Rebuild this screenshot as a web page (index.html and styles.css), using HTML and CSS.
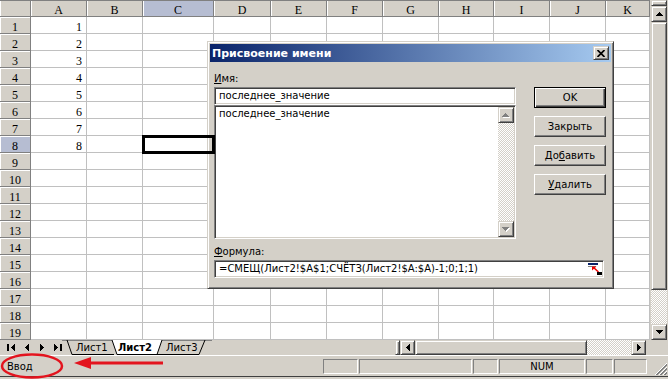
FILE: index.html
```html
<!DOCTYPE html>
<html>
<head>
    <meta charset="utf-8">
    <title>Присвоение имени</title>
    <link rel="stylesheet" href="styles.css">
</head>
<body>
<div class="window">
    <div class="sheet-area">
        <div class="grid">
            <span class="corner"></span><span class="hdr">A</span><span class="hdr">B</span><span class="hdr sel">C</span><span class="hdr">D</span><span class="hdr">E</span><span class="hdr">F</span><span class="hdr">G</span><span class="hdr">H</span><span class="hdr">I</span><span class="hdr">J</span><span class="hdr">K</span>
            <span class="rh">1</span><span class="c num">1</span><span class="c"></span><span class="c"></span><span class="c"></span><span class="c"></span><span class="c"></span><span class="c"></span><span class="c"></span><span class="c"></span><span class="c"></span><span class="c"></span>
            <span class="rh">2</span><span class="c num">2</span><span class="c"></span><span class="c"></span><span class="c"></span><span class="c"></span><span class="c"></span><span class="c"></span><span class="c"></span><span class="c"></span><span class="c"></span><span class="c"></span>
            <span class="rh">3</span><span class="c num">3</span><span class="c"></span><span class="c"></span><span class="c"></span><span class="c"></span><span class="c"></span><span class="c"></span><span class="c"></span><span class="c"></span><span class="c"></span><span class="c"></span>
            <span class="rh">4</span><span class="c num">4</span><span class="c"></span><span class="c"></span><span class="c"></span><span class="c"></span><span class="c"></span><span class="c"></span><span class="c"></span><span class="c"></span><span class="c"></span><span class="c"></span>
            <span class="rh">5</span><span class="c num">5</span><span class="c"></span><span class="c"></span><span class="c"></span><span class="c"></span><span class="c"></span><span class="c"></span><span class="c"></span><span class="c"></span><span class="c"></span><span class="c"></span>
            <span class="rh">6</span><span class="c num">6</span><span class="c"></span><span class="c"></span><span class="c"></span><span class="c"></span><span class="c"></span><span class="c"></span><span class="c"></span><span class="c"></span><span class="c"></span><span class="c"></span>
            <span class="rh">7</span><span class="c num">7</span><span class="c"></span><span class="c"></span><span class="c"></span><span class="c"></span><span class="c"></span><span class="c"></span><span class="c"></span><span class="c"></span><span class="c"></span><span class="c"></span>
            <span class="rh sel">8</span><span class="c num">8</span><span class="c"></span><span class="c active"></span><span class="c"></span><span class="c"></span><span class="c"></span><span class="c"></span><span class="c"></span><span class="c"></span><span class="c"></span><span class="c"></span>
            <span class="rh">9</span><span class="c"></span><span class="c"></span><span class="c"></span><span class="c"></span><span class="c"></span><span class="c"></span><span class="c"></span><span class="c"></span><span class="c"></span><span class="c"></span><span class="c"></span>
            <span class="rh">10</span><span class="c"></span><span class="c"></span><span class="c"></span><span class="c"></span><span class="c"></span><span class="c"></span><span class="c"></span><span class="c"></span><span class="c"></span><span class="c"></span><span class="c"></span>
            <span class="rh">11</span><span class="c"></span><span class="c"></span><span class="c"></span><span class="c"></span><span class="c"></span><span class="c"></span><span class="c"></span><span class="c"></span><span class="c"></span><span class="c"></span><span class="c"></span>
            <span class="rh">12</span><span class="c"></span><span class="c"></span><span class="c"></span><span class="c"></span><span class="c"></span><span class="c"></span><span class="c"></span><span class="c"></span><span class="c"></span><span class="c"></span><span class="c"></span>
            <span class="rh">13</span><span class="c"></span><span class="c"></span><span class="c"></span><span class="c"></span><span class="c"></span><span class="c"></span><span class="c"></span><span class="c"></span><span class="c"></span><span class="c"></span><span class="c"></span>
            <span class="rh">14</span><span class="c"></span><span class="c"></span><span class="c"></span><span class="c"></span><span class="c"></span><span class="c"></span><span class="c"></span><span class="c"></span><span class="c"></span><span class="c"></span><span class="c"></span>
            <span class="rh">15</span><span class="c"></span><span class="c"></span><span class="c"></span><span class="c"></span><span class="c"></span><span class="c"></span><span class="c"></span><span class="c"></span><span class="c"></span><span class="c"></span><span class="c"></span>
            <span class="rh">16</span><span class="c"></span><span class="c"></span><span class="c"></span><span class="c"></span><span class="c"></span><span class="c"></span><span class="c"></span><span class="c"></span><span class="c"></span><span class="c"></span><span class="c"></span>
            <span class="rh">17</span><span class="c"></span><span class="c"></span><span class="c"></span><span class="c"></span><span class="c"></span><span class="c"></span><span class="c"></span><span class="c"></span><span class="c"></span><span class="c"></span><span class="c"></span>
            <span class="rh">18</span><span class="c"></span><span class="c"></span><span class="c"></span><span class="c"></span><span class="c"></span><span class="c"></span><span class="c"></span><span class="c"></span><span class="c"></span><span class="c"></span><span class="c"></span>
            <span class="rh">19</span><span class="c"></span><span class="c"></span><span class="c"></span><span class="c"></span><span class="c"></span><span class="c"></span><span class="c"></span><span class="c"></span><span class="c"></span><span class="c"></span><span class="c"></span>
        </div>
        <div class="vscroll">
            <div class="split-box raised"></div>
            <div class="sb-btn raised"><svg width="7" height="4"><path d="M3 0h1v1h1v1h1v1h1v1H0V3h1V2h1V1h1z"/></svg></div>
            <div class="thumb raised"></div>
            <div class="track"></div>
            <div class="sb-btn raised"><svg width="7" height="4"><path d="M0 0h7v1H6v1H5v1H4v1H3V3H2V2H1V1H0z"/></svg></div>
        </div>
    </div>

    <div class="tabbar">
        <div class="tab-nav">
            <svg width="8" height="7"><path d="M0 0h2v7H0z"/><path d="M7 0h1v7H7V6H6V5H5V4H4V3h1V2h1V1h1z"/></svg>
            <svg width="4" height="7"><path d="M3 0h1v7H3V6H2V5H1V4H0V3h1V2h1V1h1z"/></svg>
            <svg width="4" height="7"><path d="M0 0h1v1h1v1h1v1h1v1H3v1H2v1H1v1H0z"/></svg>
            <svg width="8" height="7"><path d="M0 0h1v1h1v1h1v1h1v1H3v1H2v1H1v1H0z"/><path d="M6 0h2v7H6z"/></svg>
        </div>
        <div class="tabs">
            <svg class="tab-shape" width="150" height="15">
                <path d="M0 0.5H50M100 0.5H150" stroke="#808080" fill="none"/>
                <path d="M5 0L10 14.5H52" stroke="#000" fill="none"/>
                <path d="M50 0L55 14.5H95L100 0" stroke="#000" fill="#fff"/>
                <path d="M95 14.5H137L143 0" stroke="#000" fill="none"/>
            </svg>
            <span class="tab">Лист1</span>
            <span class="tab active">Лист2</span>
            <span class="tab">Лист3</span>
        </div>
        <div class="hscroll">
            <div class="splitter raised"></div>
            <div class="sb-btn raised"><svg width="4" height="7"><path d="M3 0h1v7H3V6H2V5H1V4H0V3h1V2h1V1h1z"/></svg></div>
            <div class="thumb raised"></div>
            <div class="track"></div>
            <div class="sb-btn raised"><svg width="4" height="7"><path d="M0 0h1v1h1v1h1v1h1v1H3v1H2v1H1v1H0z"/></svg></div>
            <div class="hs-end"></div>
        </div>
        <div class="sb-corner"></div>
    </div>

    <div class="statusbar">
        <span class="status-text">Ввод</span>
        <div class="panels">
            <span class="panel p1"></span>
            <span class="panel p2"></span>
            <span class="panel p3"></span>
            <span class="panel p4">NUM</span>
            <span class="panel p5"></span>
            <span class="panel p6"></span>
        </div>
        <svg class="grip" width="12" height="12">
            <path d="M12 0L0 12M12 4L4 12M12 8L8 12" stroke="#fff" fill="none"/>
            <path d="M12 1L1 12M12 2L2 12M12 5L5 12M12 6L6 12M12 9L9 12M12 10L10 12" stroke="#808080" fill="none"/>
        </svg>
    </div>

    <!-- пометка на скриншоте -->
    <svg class="annot" width="668" height="379">
        <ellipse cx="32" cy="366" rx="30" ry="11.5" stroke="#e3141e" stroke-width="2.5" fill="none"/>
        <path d="M86 363H163" stroke="#e3141e" stroke-width="3"/>
        <path d="M74 363L91 357V369Z" fill="#e3141e"/>
    </svg>

    <div class="dialog">
        <div class="titlebar">
            <span class="title">Присвоение имени</span>
            <div class="close-btn raised">
                <svg width="8" height="7"><path d="M0.5 0L7.5 7M7.5 0L0.5 7" stroke="#000" stroke-width="1.7"/></svg>
            </div>
        </div>
        <div class="dlg-main">
            <div class="dlg-left">
                <div class="field-label"><u>И</u>мя:</div>
                <div class="input name-input">последнее_значение</div>
                <div class="input list">
                    <div class="list-items">
                        <div class="list-item">последнее_значение</div>
                    </div>
                    <div class="list-scroll">
                        <div class="sb-btn raised disabled"><svg width="8" height="5"><path fill="#fff" d="M4 1h1v1h1v1h1v1h1v1H1V4h1V3h1V2h1z"/><path fill="#808080" d="M3 0h1v1h1v1h1v1h1v1H0V3h1V2h1V1h1z"/></svg></div>
                        <div class="track"></div>
                        <div class="sb-btn raised disabled"><svg width="8" height="5"><path fill="#fff" d="M1 1h7v1H7v1H6v1H5v1H4V4H3V3H2V2H1z"/><path fill="#808080" d="M0 0h7v1H6v1H5v1H4v1H3V3H2V2H1V1H0z"/></svg></div>
                    </div>
                </div>
            </div>
            <div class="dlg-buttons">
                <div class="btn default">OK</div>
                <div class="btn">Закрыть</div>
                <div class="btn">До<u>б</u>авить</div>
                <div class="btn"><u>У</u>далить</div>
            </div>
        </div>
        <div class="dlg-formula">
            <div class="field-label"><u>Ф</u>ормула:</div>
            <div class="input formula-input">
                <span>=СМЕЩ(Лист2!$A$1;СЧЁТЗ(Лист2!$A:$A)-1;0;1;1)</span>
                <span class="ref-btn">
                    <svg width="15" height="14">
                        <rect x="1" y="1" width="10" height="2" fill="#0a246a"/>
                        <rect x="1" y="4" width="8" height="1" fill="#808080"/>
                        <path d="M6.5 5.5L11.5 10" stroke="#e00" stroke-width="1.5"/>
                        <path d="M5 4.5H9.5L5 8.5Z" fill="#e00"/>
                        <rect x="10" y="10" width="5" height="3" fill="#000"/>
                    </svg>
                </span>
            </div>
        </div>
    </div>
</div>
</body>
</html>
```

FILE: styles.css
```css
/* Окно Excel */
body {
    margin: 0;
    background-color: #d4d0c8;
    font-family: "DejaVu Sans", sans-serif;
    font-size: 10px;
    color: #000;
}

.window {
    position: relative;
    width: 668px;
    height: 379px;
    overflow: hidden;
}

/* Лист */
.sheet-area {
    display: flex;
    height: 340px;
    overflow: hidden;
}

.grid {
    display: grid;
    grid-template-columns: 31px 56px 56px 71px 57px 56px 56px 56px 55px 56px 56px 44px;
    grid-auto-rows: 17px;
    width: 650px;
    flex: none;
    background-color: #fff;
    font-family: "Liberation Serif", serif;
    font-size: 12px;
}

.grid span {
    box-sizing: border-box;
    border-right: 1px solid #c0c0c0;
    border-bottom: 1px solid #c0c0c0;
    line-height: 21px;
    overflow: hidden;
}

.grid .corner,
.grid .hdr,
.grid .rh {
    background-color: #d4d0c8;
    border-right-color: #808080;
    border-bottom-color: #808080;
    box-shadow: inset 1px 1px #fff;
    text-align: center;
}

.grid .corner,
.grid .hdr {
    box-shadow: inset 0 1px #808080, inset 1px 1px #fff;
}

.grid .sel {
    background-color: #b6bdd2;
}

.grid .num {
    text-align: right;
    padding-right: 4px;
}

.grid .active {
    outline: 3px solid #000;
    outline-offset: -2px;
    position: relative;
    z-index: 1;
    overflow: visible;
}

/* Объёмные элементы */
.raised {
    box-sizing: border-box;
    background-color: #d4d0c8;
    border: 1px solid;
    border-color: #d4d0c8 #404040 #404040 #d4d0c8;
    box-shadow: inset 1px 1px #fff, inset -1px -1px #808080;
}

.sb-btn {
    width: 16px;
    height: 16px;
    flex: none;
    display: flex;
    align-items: center;
    justify-content: center;
}

.track {
    flex: 1;
    background: repeating-conic-gradient(#fff 0 25%, #d4d0c8 0 50%) 0 0 / 2px 2px;
}

/* Полосы прокрутки */
.vscroll {
    width: 18px;
    flex: none;
    display: flex;
    flex-direction: column;
    padding: 0 1px;
    box-sizing: border-box;
}

.split-box {
    height: 6px;
}

.vscroll .thumb {
    height: 268px;
}

.tabbar {
    display: flex;
    height: 15px;
    border-bottom: 1px solid #fff;
}

.tab-nav {
    width: 62px;
    display: flex;
    align-items: center;
    justify-content: space-between;
    padding-left: 7px;
    box-sizing: border-box;
}

.tabs {
    position: relative;
    width: 150px;
    display: flex;
    align-items: center;
    padding-left: 14px;
    box-sizing: border-box;
}

.tab-shape {
    position: absolute;
    left: 0;
    top: 0;
}

.tab {
    position: relative;
    width: 42px;
    line-height: 14px;
}

.tab.active {
    width: 48px;
    font-weight: bold;
}

.hscroll {
    margin-left: auto;
    width: 255px;
    display: flex;
}

.splitter {
    width: 5px;
}

.hscroll .sb-btn {
    width: 15px;
    height: 15px;
}

.hscroll .thumb {
    width: 172px;
}

.hscroll .track {
    flex: none;
    width: 44px;
}

.hs-end {
    width: 4px;
}

.sb-corner {
    width: 18px;
}

/* Строка состояния */
.statusbar {
    display: flex;
    align-items: center;
    height: 20px;
    border-bottom: 1px solid #404040;
}

.status-text {
    padding-left: 7px;
}

.panels {
    margin-left: auto;
    display: flex;
    gap: 1px;
}

.panel {
    height: 15px;
    box-sizing: border-box;
    border: 1px solid;
    border-color: #808080 #fff #fff #808080;
    text-align: center;
    line-height: 13px;
}

.p1 { width: 35px; }
.p2 { width: 113px; }
.p3 { width: 25px; }
.p4 { width: 86px; }
.p5 { width: 27px; }
.p6 { width: 33px; }

.grip {
    align-self: flex-end;
    margin: 0 1px 1px 8px;
}

.annot {
    position: absolute;
    left: 0;
    top: 0;
    pointer-events: none;
}

/* Диалог "Присвоение имени" */
.dialog {
    position: absolute;
    left: 207px;
    top: 41px;
    width: 407px;
    height: 248px;
    box-sizing: border-box;
    padding: 2px;
    background-color: #d4d0c8;
    border: 1px solid;
    border-color: #d4d0c8 #404040 #404040 #d4d0c8;
    box-shadow: inset 1px 1px #fff, inset -1px -1px #808080;
}

.titlebar {
    display: flex;
    align-items: center;
    height: 18px;
    padding: 0 2px;
    background: linear-gradient(to right, #0a246a, #a6caf0);
    color: #fff;
    font-weight: bold;
    font-size: 11px;
}

.close-btn {
    margin-left: auto;
    width: 16px;
    height: 14px;
    display: flex;
    align-items: center;
    justify-content: center;
}

.dlg-main {
    display: flex;
    gap: 18px;
    padding: 10px 0 0 4px;
}

.dlg-left {
    width: 302px;
}

.field-label {
    height: 14px;
    line-height: 14px;
}

.input {
    box-sizing: border-box;
    background-color: #fff;
    border: 1px solid;
    border-color: #808080 #fff #fff #808080;
    box-shadow: inset 1px 1px #404040, inset -1px -1px #d4d0c8;
}

.name-input,
.formula-input {
    height: 18px;
    margin-top: 1px;
    padding: 0 1px 0 4px;
    line-height: 16px;
}

.list {
    display: flex;
    height: 134px;
    padding: 1px;
}

.list-items {
    flex: 1;
    padding-left: 3px;
}

.list-item {
    line-height: 13px;
}

.list-scroll {
    width: 16px;
    display: flex;
    flex-direction: column;
}

.dlg-buttons {
    width: 72px;
    display: flex;
    flex-direction: column;
    gap: 8px;
    padding-top: 15px;
}

.btn {
    height: 21px;
    box-sizing: border-box;
    display: flex;
    align-items: center;
    justify-content: center;
    border: 1px solid;
    border-color: #fff #404040 #404040 #fff;
    box-shadow: inset -1px -1px #808080;
}

.btn.default {
    border-color: #000;
    box-shadow: inset 1px 1px #fff, inset -1px -1px #404040, inset -2px -2px #808080;
}

.dlg-formula {
    margin-top: 6px;
    padding-left: 4px;
}

.formula-input {
    width: 390px;
    display: flex;
    align-items: center;
}

.ref-btn {
    margin-left: auto;
    display: flex;
}
```
